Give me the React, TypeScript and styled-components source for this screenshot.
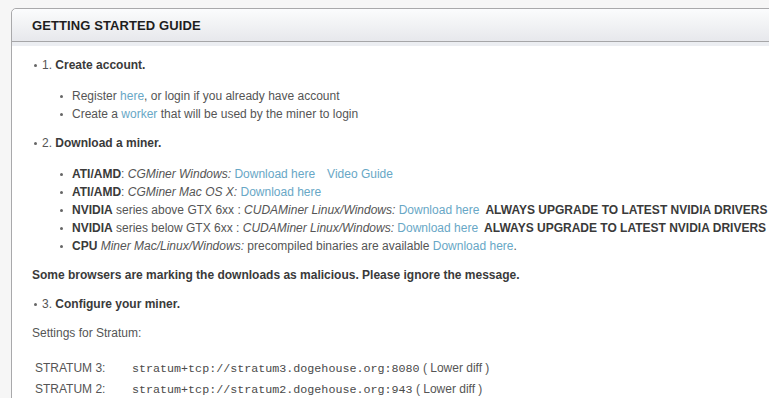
import React from "react";
import styled, { createGlobalStyle } from "styled-components";

const GlobalStyle = createGlobalStyle`
  html, body {
    margin: 0;
    padding: 0;
    background: #f6f6f6;
    overflow: hidden;
  }
  body {
    font-family: "Liberation Sans", Arial, Helvetica, sans-serif;
    font-size: 12px;
    color: #555;
  }
`;

interface Miner {
  vendor: string;
  series?: string;
  miner: string;
  links: string[];
  tail?: string;
  warning?: boolean;
}

const miners: Miner[] = [
  { vendor: "ATI/AMD", miner: "CGMiner Windows:", links: ["Download here", "Video Guide"] },
  { vendor: "ATI/AMD", miner: "CGMiner Mac OS X:", links: ["Download here"] },
  {
    vendor: "NVIDIA",
    series: " series above GTX 6xx : ",
    miner: "CUDAMiner Linux/Windows:",
    links: ["Download here"],
    warning: true,
  },
  {
    vendor: "NVIDIA",
    series: " series below GTX 6xx : ",
    miner: "CUDAMiner Linux/Windows:",
    links: ["Download here"],
    warning: true,
  },
  {
    vendor: "CPU",
    series: " ",
    miner: "Miner Mac/Linux/Windows:",
    tail: " precompiled binaries are available ",
    links: ["Download here"],
  },
];

const stratums = [
  { name: "STRATUM 3:", url: "stratum+tcp://stratum3.dogehouse.org:8080" },
  { name: "STRATUM 2:", url: "stratum+tcp://stratum2.dogehouse.org:943" },
];

const App: React.FC = () => {
  return (
    <>
      <GlobalStyle />
      <StyledPage>
        <StyledPanel>
          <StyledHeader>
            <StyledTitle>GETTING STARTED GUIDE</StyledTitle>
          </StyledHeader>
          <StyledBody>
            <StyledList>
              <StyledItem>
                1. <b>Create account.</b>
                <StyledSubList>
                  <StyledSubItem>
                    Register <StyledLink>here</StyledLink>, or login if you already have account
                  </StyledSubItem>
                  <StyledSubItem>
                    Create a <StyledLink>worker</StyledLink> that will be used by the miner to login
                  </StyledSubItem>
                </StyledSubList>
              </StyledItem>
              <StyledItem>
                2. <b>Download a miner.</b>
                <StyledSubList>
                  {miners.map((m, i) => (
                    <StyledSubItem key={i}>
                      <b>{m.vendor}</b>
                      {m.series ?? ": "}
                      <i>{m.miner}</i>
                      {m.tail ?? " "}
                      {m.links.map((l, j) => (
                        <StyledLink key={j} $gap={j > 0}>
                          {l}
                        </StyledLink>
                      ))}
                      {m.tail && "."}
                      {m.warning && <StyledWarning>ALWAYS UPGRADE TO LATEST NVIDIA DRIVERS</StyledWarning>}
                    </StyledSubItem>
                  ))}
                </StyledSubList>
              </StyledItem>
            </StyledList>
            <StyledNote>Some browsers are marking the downloads as malicious. Please ignore the message.</StyledNote>
            <StyledList>
              <StyledItem>
                3. <b>Configure your miner.</b>
              </StyledItem>
            </StyledList>
            <StyledPara>Settings for Stratum:</StyledPara>
            <StyledTable>
              {stratums.map((s) => (
                <StyledRow key={s.name}>
                  <StyledLabel>{s.name}</StyledLabel>
                  <span>
                    <StyledCode>{s.url}</StyledCode> ( Lower diff )
                  </span>
                </StyledRow>
              ))}
            </StyledTable>
          </StyledBody>
        </StyledPanel>
      </StyledPage>
    </>
  );
};

export default App;

const StyledPage = styled.div`
  padding: 8px 0 0 11px;
  width: 800px;
`;

const StyledPanel = styled.div`
  background: #fff;
  border: 1px solid #a9a9ab;
  border-radius: 5px 0 0 0;
  height: 420px;
`;

const StyledHeader = styled.div`
  height: 32px;
  display: flex;
  align-items: center;
  padding-left: 20px;
  border-radius: 5px 0 0 0;
  background: linear-gradient(to bottom, #fbfcfd 0%, #f1f2f4 50%, #e7e8ec 100%);
  border-bottom: 1px solid #a6a6a8;
  box-shadow: 0 4px 0 #eceef2;
`;

const StyledTitle = styled.h2`
  margin: 1px 0 0;
  font-size: 13px;
  font-weight: bold;
  color: #1e1e1e;
  letter-spacing: 0.1px;
`;

const StyledBody = styled.div`
  padding: 14px 20px 0;
  line-height: 18px;

  b {
    color: #3a3a3a;
  }
`;

const StyledList = styled.ul`
  list-style: none;
  margin: 0;
  padding: 0;
`;

const StyledItem = styled.li`
  position: relative;
  padding-left: 10px;
  margin-bottom: 11px;

  &::before {
    content: "";
    position: absolute;
    left: 2px;
    top: 8px;
    width: 3px;
    height: 3px;
    border-radius: 50%;
    background: #666;
  }
`;

const StyledSubList = styled.ul`
  list-style: none;
  margin: 13px 0 0;
  padding: 0 0 0 30px;
`;

const StyledSubItem = styled.li`
  position: relative;
  white-space: nowrap;

  &::before {
    content: "";
    position: absolute;
    left: -12px;
    top: 8px;
    width: 3px;
    height: 3px;
    border-radius: 50%;
    background: #666;
  }
`;

const StyledLink = styled.a<{ $gap?: boolean }>`
  color: #68a7c6;
  text-decoration: none;
  margin-left: ${({ $gap }) => ($gap ? "12px" : "0")};
`;

const StyledWarning = styled.b`
  margin-left: 6px;
`;

const StyledNote = styled.p`
  margin: 0 0 11px;
  font-weight: bold;
  color: #3a3a3a;
`;

const StyledPara = styled.p`
  margin: 0 0 16px;
`;

const StyledTable = styled.div`
  display: grid;
  grid-template-columns: 97px auto;
  padding-left: 3px;
`;

const StyledRow = styled.div`
  display: contents;

  & > * {
    height: 21px;
    line-height: 21px;
  }
`;

const StyledLabel = styled.span``;

const StyledCode = styled.code`
  font-family: "Liberation Mono", "Courier New", monospace;
  font-size: 11.7px;
  color: #4a4a4a;
`;
